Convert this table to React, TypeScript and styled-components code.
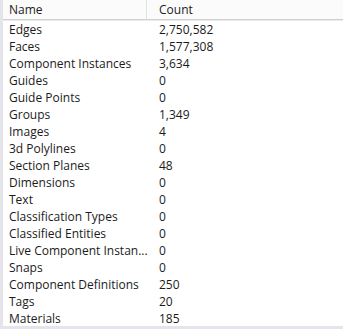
import * as React from "react";
import styled, { createGlobalStyle } from "styled-components";

const GlobalStyle = createGlobalStyle`
  html, body {
    margin: 0;
    padding: 0;
    background: #ffffff;
  }
`;

const Panel = styled.div`
  width: 343px;
  height: 329px;
  box-sizing: border-box;
  border-left: 3px solid #e4e4ea;
  border-bottom: 3px solid #e4e4ea;
  background: #ffffff;
  font-family: "Open Sans", "Noto Sans", sans-serif;
  font-size: 12px;
  color: #1b1b1b;
  overflow: hidden;
`;

const Header = styled.div`
  display: grid;
  grid-template-columns: 144px 1fr;
  height: 19px;
  background: #fbfbfb;
  border-bottom: 1px solid #d0d0d0;
  box-shadow: 0 1px 0 #ececec;
`;

const HeaderCell = styled.div<{ $divider?: boolean }>`
  display: flex;
  align-items: center;
  padding-left: ${(p) => (p.$divider ? "12px" : "6px")};
  border-right: ${(p) => (p.$divider ? "none" : "1px solid #e2e2e2")};
  line-height: 19px;
`;

const Body = styled.div`
  display: flex;
  flex-direction: column;
  padding-top: 1px;
`;

const Row = styled.div`
  display: grid;
  grid-template-columns: 145px 1fr;
  height: 17px;
  align-items: center;
  line-height: 17px;
`;

const NameCell = styled.div`
  padding-left: 6px;
  white-space: nowrap;
  overflow: hidden;
`;

const CountCell = styled.div`
  padding-left: 11px;
`;

const rows: [string, string][] = [
  ["Edges", "2,750,582"],
  ["Faces", "1,577,308"],
  ["Component Instances", "3,634"],
  ["Guides", "0"],
  ["Guide Points", "0"],
  ["Groups", "1,349"],
  ["Images", "4"],
  ["3d Polylines", "0"],
  ["Section Planes", "48"],
  ["Dimensions", "0"],
  ["Text", "0"],
  ["Classification Types", "0"],
  ["Classified Entities", "0"],
  ["Live Component Instan...", "0"],
  ["Snaps", "0"],
  ["Component Definitions", "250"],
  ["Tags", "20"],
  ["Materials", "185"],
];

export default function App() {
  return (
    <>
      <GlobalStyle />
      <Panel>
        <Header>
          <HeaderCell>Name</HeaderCell>
          <HeaderCell $divider>Count</HeaderCell>
        </Header>
        <Body>
          {rows.map(([name, count]) => (
            <Row key={name}>
              <NameCell>{name}</NameCell>
              <CountCell>{count}</CountCell>
            </Row>
          ))}
        </Body>
      </Panel>
    </>
  );
}
